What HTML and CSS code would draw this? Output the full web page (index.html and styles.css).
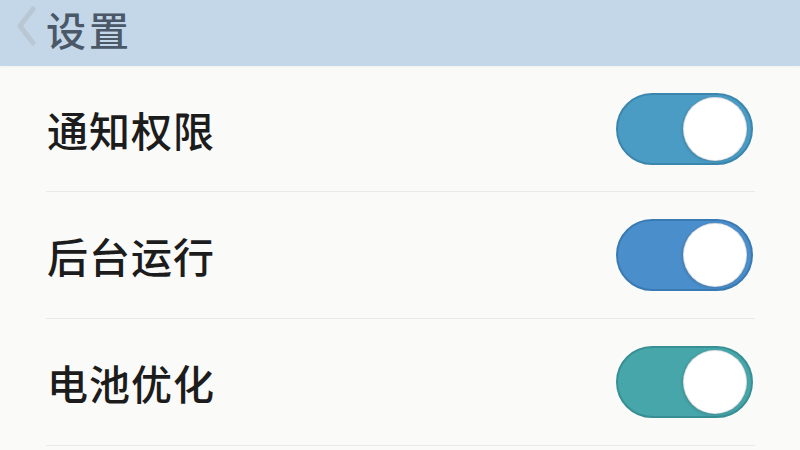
FILE: index.html
```html
<!DOCTYPE html>
<html lang="zh">
<head>
<meta charset="utf-8">
<title>设置</title>
<link rel="stylesheet" href="styles.css">
</head>
<body>
<header class="topbar">
  <svg class="back" width="24" height="44" viewBox="0 0 24 44"><path d="M19 5 L6 22 L19 39" fill="none" stroke="#b8c7d3" stroke-width="5" stroke-linecap="round" stroke-linejoin="round"/></svg>
  <h1 class="title">设置</h1>
</header>
<main class="list">
  <div class="row">
    <span class="label">通知权限</span>
    <span class="switch switch-a"><span class="knob"></span></span>
  </div>
  <div class="row">
    <span class="label">后台运行</span>
    <span class="switch switch-b"><span class="knob"></span></span>
  </div>
  <div class="row">
    <span class="label">电池优化</span>
    <span class="switch switch-c"><span class="knob"></span></span>
  </div>
</main>
</body>
</html>
```
FILE: styles.css
```css
* { box-sizing: border-box; }
html, body { margin: 0; padding: 0; }
body {
  width: 800px;
  height: 450px;
  overflow: hidden;
  background: #fafaf8;
  font-family: "Noto Sans CJK SC", "Noto Sans", sans-serif;
}
.topbar {
  height: 66px;
  background: #c4d7e8;
  display: flex;
  align-items: flex-start;
  padding: 0 0 0 14px;
  gap: 8px;
  box-shadow: 0 1px 2px rgba(0,0,0,0.04);
}
.back { margin-top: 4px; }
.title {
  margin: 0;
  font-size: 40px;
  line-height: 1.45;
  font-weight: 500;
  color: #4a5868;
  letter-spacing: 3px;
}
.list { padding: 0 45px 0 46px; }
.row {
  height: 127px;
  display: flex;
  align-items: center;
  justify-content: space-between;
  border-bottom: 1px solid #e9e9e6;
}
.row:first-child { height: 126px; }
.label {
  font-size: 41px;
  font-weight: 500;
  color: #1c1c1c;
  letter-spacing: 1px;
  padding-left: 1px;
}
.switch {
  width: 137px;
  height: 72px;
  border-radius: 36px;
  display: flex;
  align-items: center;
  justify-content: flex-end;
  padding-right: 4px;
  margin-right: 2px;
}
.switch-a { background: #4a9cc5; border: 2px solid #3a86ad; }
.switch-b { background: #4a8ecb; border: 2px solid #3a7ab3; }
.switch-c { background: #46a6aa; border: 2px solid #378f93; }
.knob {
  width: 64px;
  height: 64px;
  border-radius: 50%;
  background: #ffffff;
  border: 1px solid rgba(0,0,0,0.12);
  box-shadow: -1px 1px 3px rgba(0,0,0,0.15);
}
```
